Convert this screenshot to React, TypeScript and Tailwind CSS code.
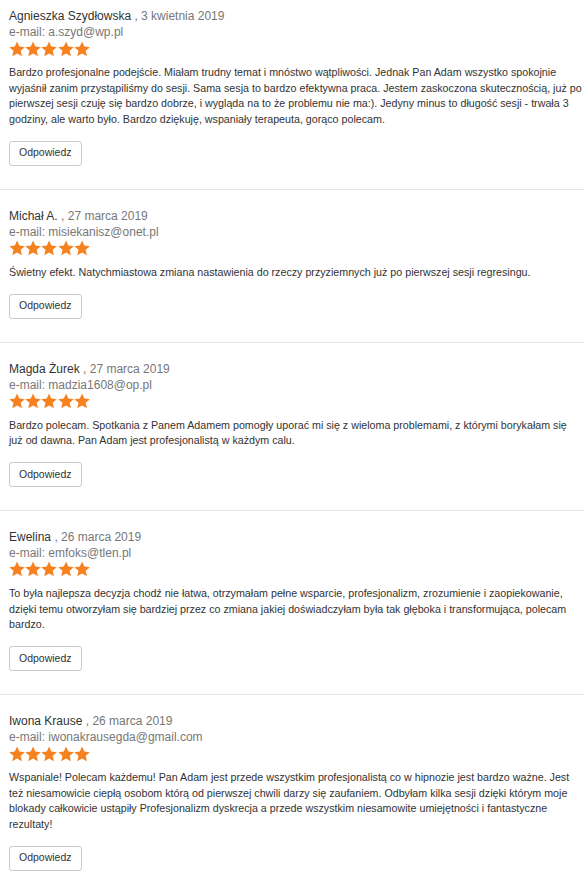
const reviews = [
  {
    name: "Agnieszka Szydłowska",
    date: "3 kwietnia 2019",
    email: "a.szyd@wp.pl",
    text: ["Bardzo profesjonalne podejście. Miałam trudny temat i mnóstwo wątpliwości. Jednak Pan Adam wszystko spokojnie wyjaśnił zanim przystąpiliśmy do sesji. Sama sesja to bardzo efektywna praca. Jestem zaskoczona skutecznością, już po pierwszej sesji czuję się bardzo dobrze, i wygląda na to że problemu nie ma:). Jedyny minus to długość sesji - trwała 3 godziny, ale warto było. Bardzo dziękuję, wspaniały terapeuta, gorąco polecam."],
  },
  {
    name: "Michał A.",
    date: "27 marca 2019",
    email: "misiekanisz@onet.pl",
    text: ["Świetny efekt. Natychmiastowa zmiana nastawienia do rzeczy przyziemnych już po pierwszej sesji regresingu."],
  },
  {
    name: "Magda Żurek",
    date: "27 marca 2019",
    email: "madzia1608@op.pl",
    // przeglądarka w oryginale łamie przed "już"
    text: [
      "Bardzo polecam. Spotkania z Panem Adamem pomogły uporać mi się z wieloma problemami, z którymi borykałam się",
      "już od dawna. Pan Adam jest profesjonalistą w każdym calu.",
    ],
  },
  {
    name: "Ewelina",
    date: "26 marca 2019",
    email: "emfoks@tlen.pl",
    text: ["To była najlepsza decyzja chodź nie łatwa, otrzymałam pełne wsparcie, profesjonalizm, zrozumienie i zaopiekowanie, dzięki temu otworzyłam się bardziej przez co zmiana jakiej doświadczyłam była tak głęboka i transformująca, polecam bardzo."],
  },
  {
    name: "Iwona Krause",
    date: "26 marca 2019",
    email: "iwonakrausegda@gmail.com",
    text: ["Wspaniale! Polecam każdemu! Pan Adam jest przede wszystkim profesjonalistą co w hipnozie jest bardzo ważne. Jest też niesamowicie ciepłą osobom którą od pierwszej chwili darzy się zaufaniem. Odbyłam kilka sesji dzięki którym moje blokady całkowicie ustąpiły Profesjonalizm dyskrecja a przede wszystkim niesamowite umiejętności i fantastyczne rezultaty!"],
  },
];

function Star() {
  return (
    <svg width="16.2" height="16" viewBox="0 0 24 24" className="shrink-0">
      <path
        fill="#f5821f"
        d="M12 0.8l3.4 7.6 8.3 0.8-6.3 5.5 1.9 8.2L12 18.6l-7.3 4.3 1.9-8.2L0.3 9.2l8.3-0.8z"
      />
    </svg>
  );
}

export default function App() {
  return (
    <div className="w-[584px] bg-white font-['Liberation_Sans',Arial,sans-serif]">
      {reviews.map((r, i) => (
        <div
          key={i}
          className={`border-b border-[#e5e5e5] pl-[9px] pr-0 pb-[23px] ${i === 0 ? "pt-[8px]" : "pt-[18px]"}`}
        >
          <div className="text-[12px] leading-4 text-[#333]">
            {r.name} <span className="text-[#777]">, {r.date}</span>
          </div>
          <div className="text-[12px] leading-4 text-[#777]">e-mail: {r.email}</div>
          <div className="flex h-[17px] items-center">
            {[0, 1, 2, 3, 4].map((s) => (
              <Star key={s} />
            ))}
          </div>
          <p className="mt-[8px] text-[10.7px] leading-[15.7px] text-[#333]">
            {r.text.map((line, j) => (
              <span key={j}>
                {j > 0 && <br />}
                {line}
              </span>
            ))}
          </p>
          <button className="mt-[13px] h-[25px] rounded-[3px] border border-[#ccc] bg-white px-[9px] text-[10.5px] text-[#333]">
            Odpowiedz
          </button>
        </div>
      ))}
    </div>
  );
}
